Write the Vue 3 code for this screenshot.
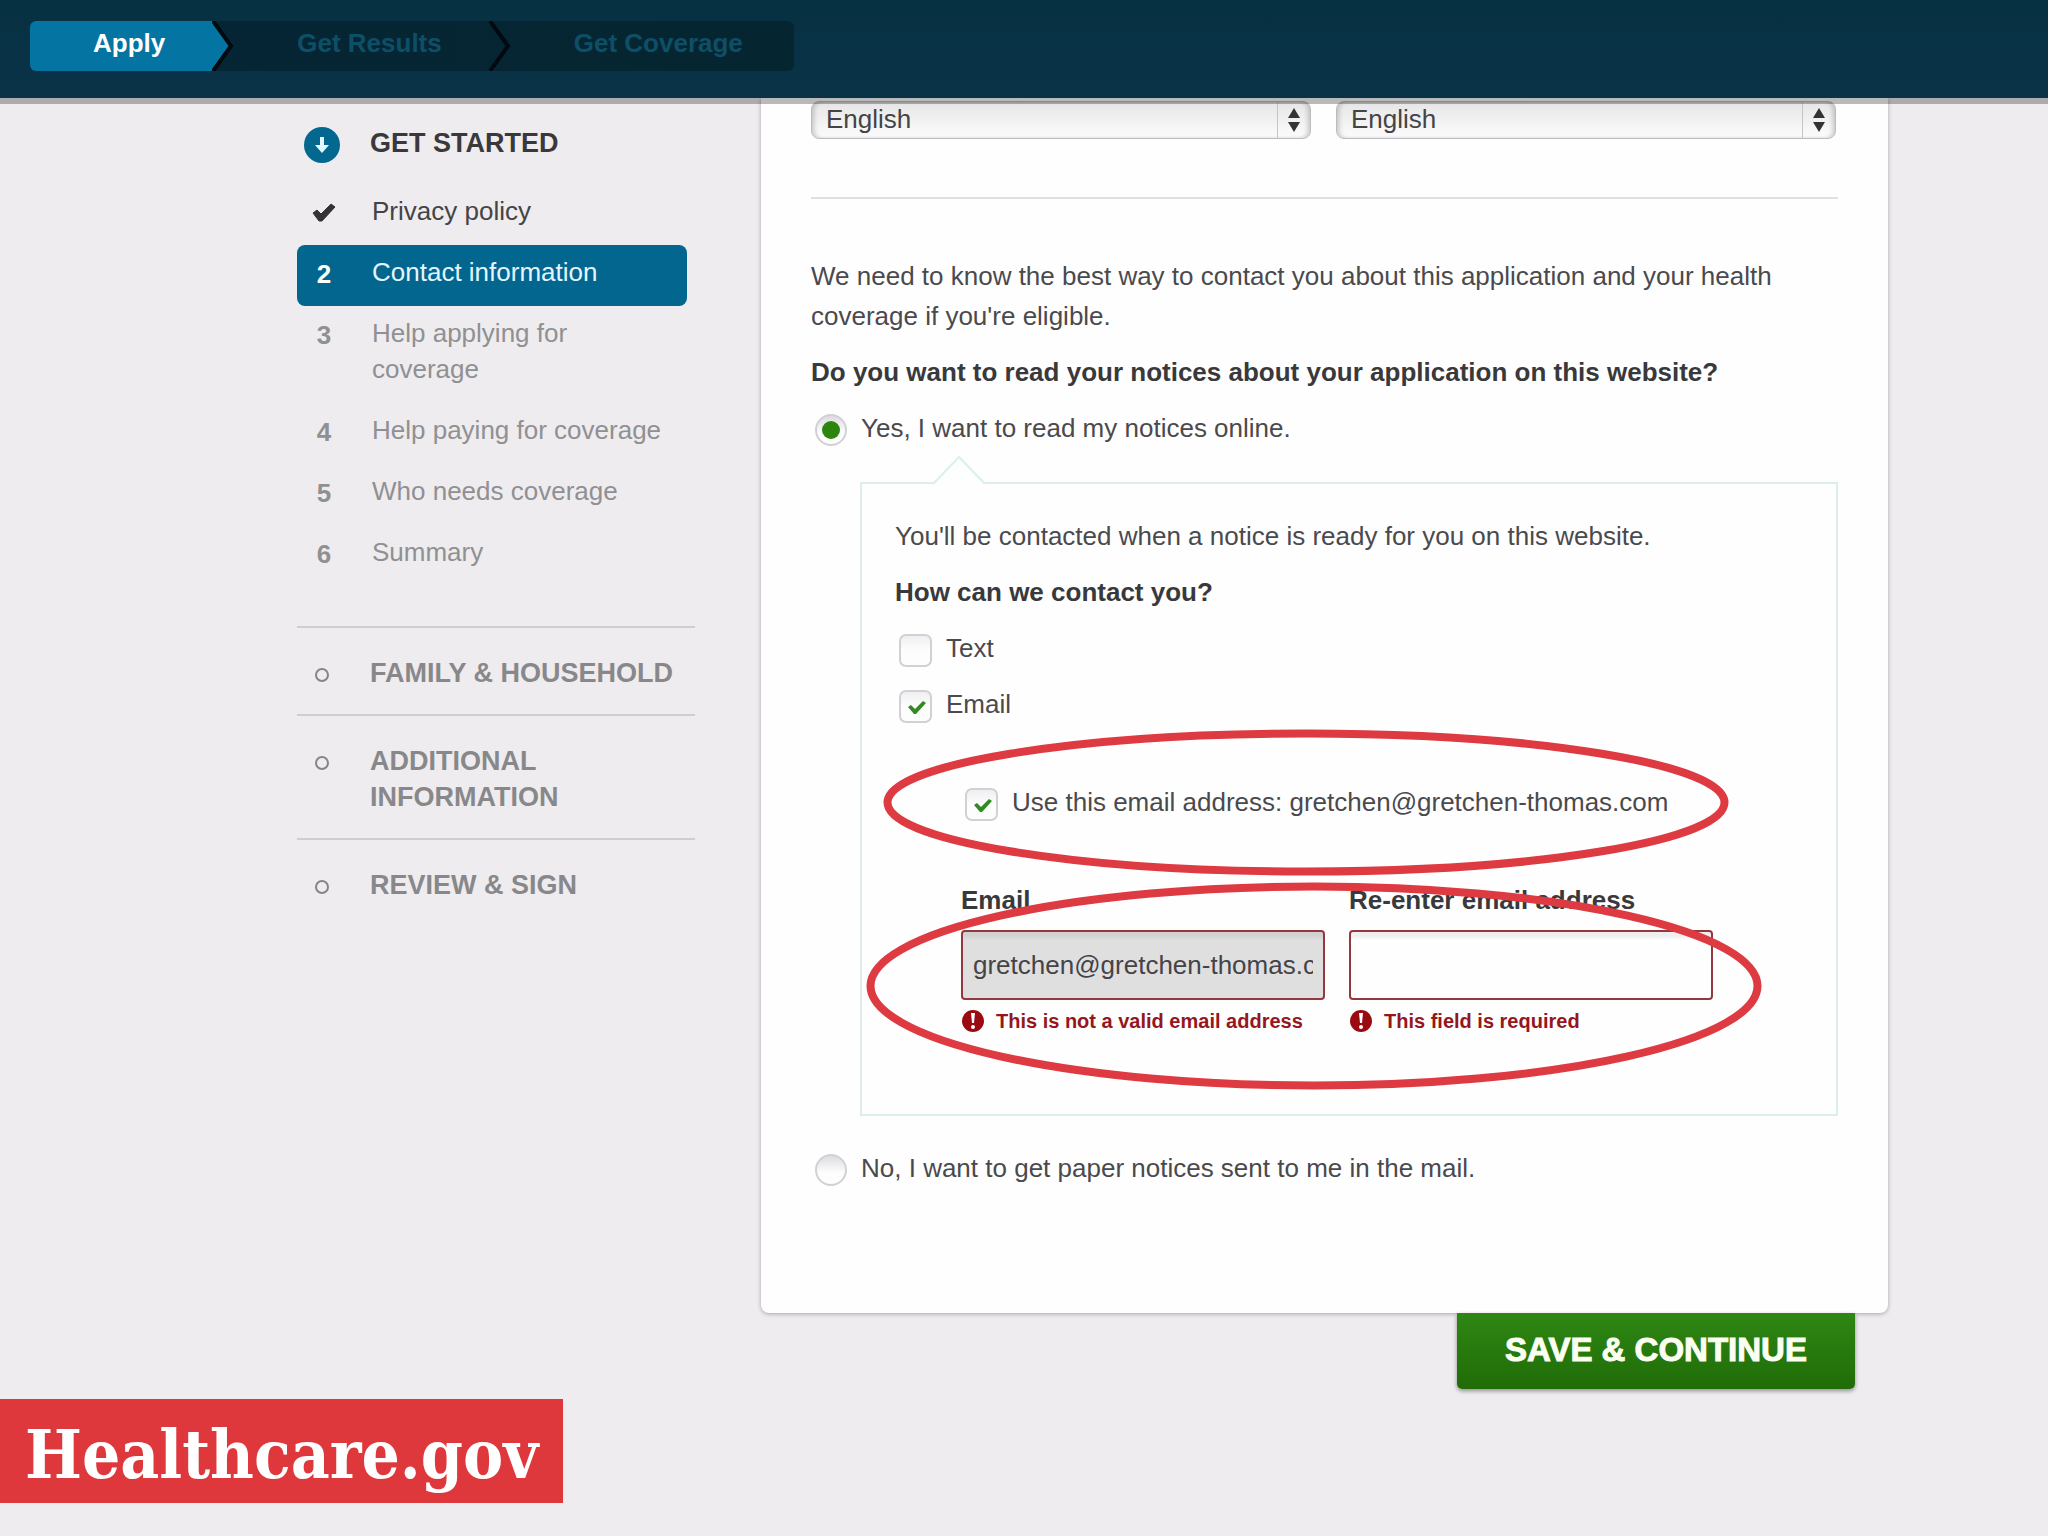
<script setup>
import { ref } from 'vue'

const steps = [
  { label: 'Apply', active: true },
  { label: 'Get Results', active: false },
  { label: 'Get Coverage', active: false },
]

const tasks = [
  { label: 'Privacy policy', done: true },
  { number: 2, label: 'Contact information', current: true },
  { number: 3, label: 'Help applying for coverage' },
  { number: 4, label: 'Help paying for coverage' },
  { number: 5, label: 'Who needs coverage' },
  { number: 6, label: 'Summary' },
]

const sections = ['Family & Household', 'Additional Information', 'Review & Sign']

const spoken = ref('English')
const written = ref('English')
const notices = ref('online')
const byText = ref(false)
const byEmail = ref(true)
const useAccountEmail = ref(true)
const email = ref('gretchen@gretchen-thomas.com')
const emailAgain = ref('')
</script>

<template>
  <div class="page">
    <header class="topbar">
      <nav aria-label="Progress">
        <ol class="steps">
          <li v-for="(step, i) in steps" :key="step.label" class="step" :class="{ active: step.active }">
            <a href="#">{{ step.label }}</a>
            <svg v-if="i < steps.length - 1" class="chevron" viewBox="0 0 22 50" aria-hidden="true">
              <path v-if="step.active" d="M0 0 L19 25 L0 50 Z" fill="#0475a3" />
              <path d="M1 0 L19 25 L1 50" fill="none" stroke="#020a10" stroke-width="4" />
            </svg>
          </li>
        </ol>
      </nav>
    </header>

    <div class="layout">
      <aside class="sidebar">
        <section class="group">
          <h2 class="group-title open">
            <span class="marker">
              <svg width="36" height="36" viewBox="0 0 36 36" aria-hidden="true">
                <circle cx="18" cy="18" r="18" fill="#03688f" />
                <path d="M16 10h4v8h5l-7 8-7-8h5z" fill="#e6f8ff" />
              </svg>
            </span>
            <span>Get Started</span>
          </h2>
          <ul class="tasks">
            <li v-for="task in tasks" :key="task.label">
              <a href="#" class="task" :class="{ done: task.done, current: task.current }">
                <span class="marker">
                  <svg v-if="task.done" width="24" height="20" viewBox="0 0 24 20" aria-hidden="true">
                    <path d="M1 10 L5 7 L9 11 L19 1 L23 4 L10 18 L7 18 Z" fill="#333336" stroke="#333336" stroke-linejoin="round" />
                  </svg>
                  <template v-else>{{ task.number }}</template>
                </span>
                <span>{{ task.label }}</span>
              </a>
            </li>
          </ul>
        </section>
        <section v-for="name in sections" :key="name" class="group later">
          <h2 class="group-title">
            <span class="marker">
              <svg width="16" height="16" viewBox="0 0 16 16" aria-hidden="true">
                <circle cx="8" cy="8" r="6" fill="none" stroke="#858588" stroke-width="2" />
              </svg>
            </span>
            <span>{{ name }}</span>
          </h2>
        </section>
      </aside>

      <main class="main">
        <form @submit.prevent>
          <div class="card">
            <div class="languages">
              <div class="picker">
                <select v-model="spoken" aria-label="Preferred spoken language">
                  <option>English</option>
                </select>
                <svg class="updown" viewBox="0 0 12 24" aria-hidden="true">
                  <path d="M6 0 L12 10 H0 Z M0 14 H12 L6 24 Z" fill="#333336" />
                </svg>
              </div>
              <div class="picker">
                <select v-model="written" aria-label="Preferred written language">
                  <option>English</option>
                </select>
                <svg class="updown" viewBox="0 0 12 24" aria-hidden="true">
                  <path d="M6 0 L12 10 H0 Z M0 14 H12 L6 24 Z" fill="#333336" />
                </svg>
              </div>
            </div>
            <hr class="rule" />

            <div class="stack">
              <p>We need to know the best way to contact you about this application and your health coverage if you're eligible.</p>
              <p class="strong">Do you want to read your notices about your application on this website?</p>
              <label class="option">
                <input v-model="notices" type="radio" name="notices" value="online" />
                <span>Yes, I want to read my notices online.</span>
              </label>
            </div>

            <div class="details">
              <svg class="pointer" viewBox="0 0 54 30" aria-hidden="true">
                <path d="M2 28 L27 2 L52 28 V30 H2 Z" fill="#fdffff" />
                <path d="M1 29 L27 2 L53 29" fill="none" stroke="#dcefed" stroke-width="2" />
              </svg>
              <div class="stack">
                <p>You'll be contacted when a notice is ready for you on this website.</p>
                <p class="strong">How can we contact you?</p>
                <label class="option">
                  <input v-model="byText" type="checkbox" />
                  <span>Text</span>
                </label>
                <label class="option">
                  <input v-model="byEmail" type="checkbox" />
                  <span>Email</span>
                </label>
              </div>

              <div class="email-block">
                <label class="option">
                  <input v-model="useAccountEmail" type="checkbox" />
                  <span>Use this email address: gretchen@gretchen-thomas.com</span>
                </label>
                <div class="fields">
                  <div class="field">
                    <label for="email" class="strong">Email</label>
                    <input id="email" v-model="email" class="box filled" type="text" readonly aria-describedby="email-error" />
                    <p id="email-error" class="error">
                      <svg width="24" height="24" viewBox="0 0 24 24" aria-hidden="true">
                        <circle cx="12" cy="12" r="11" fill="#9b0a10" />
                        <path d="M10 4h4l-1 10h-2z" fill="#fff" />
                        <circle cx="12" cy="18" r="2" fill="#fff" />
                      </svg>
                      <span>This is not a valid email address</span>
                    </p>
                  </div>
                  <div class="field">
                    <label for="email-again" class="strong">Re-enter email address</label>
                    <input id="email-again" v-model="emailAgain" class="box" type="text" aria-describedby="again-error" />
                    <p id="again-error" class="error">
                      <svg width="24" height="24" viewBox="0 0 24 24" aria-hidden="true">
                        <circle cx="12" cy="12" r="11" fill="#9b0a10" />
                        <path d="M10 4h4l-1 10h-2z" fill="#fff" />
                        <circle cx="12" cy="18" r="2" fill="#fff" />
                      </svg>
                      <span>This field is required</span>
                    </p>
                  </div>
                </div>
              </div>

              <svg class="ring ring-checkbox" width="846" height="147" viewBox="0 0 846 147" aria-hidden="true">
                <ellipse cx="423" cy="73.5" rx="418.5" ry="69" />
              </svg>
              <svg class="ring ring-fields" width="896" height="208" viewBox="0 0 896 208" aria-hidden="true">
                <ellipse cx="448" cy="104" rx="443.5" ry="99.5" />
              </svg>
            </div>

            <label class="option">
              <input v-model="notices" type="radio" name="notices" value="paper" />
              <span>No, I want to get paper notices sent to me in the mail.</span>
            </label>
          </div>
          <div class="actions">
            <button type="submit" class="save">Save &amp; Continue</button>
          </div>
        </form>
      </main>
    </div>

    <footer class="tag">Healthcare.gov</footer>
  </div>
</template>

<style>
body {
  background: #eeecee;
}
</style>

<style scoped>
.page {
  min-height: 100vh;
  background: #eeecee;
  color: #4a4a4d;
  font-family: "Liberation Sans", Arial, Helvetica, sans-serif;
  font-size: 26px;
  line-height: 40px;
}

.page *,
.page *::after {
  box-sizing: border-box;
}

h2,
p,
ul,
ol {
  margin: 0;
  padding: 0;
  list-style: none;
}

a {
  color: inherit;
  text-decoration: none;
}

.strong {
  color: #39393c;
  font-weight: 700;
}

/* Top progress bar */
.topbar {
  position: relative;
  z-index: 2;
  display: flex;
  height: 98px;
  padding: 21px 30px;
  background: linear-gradient(#063142, #0a3248);
  box-shadow: 0 6px 0 rgba(0, 0, 0, 0.27);
}

.steps {
  display: flex;
  height: 50px;
  padding-right: 4px;
  overflow: hidden;
  border-radius: 6px;
  background: linear-gradient(90deg, #052536, #052630);
}

.step {
  display: flex;
  color: #0e4f68;
  font-weight: 700;
}

.step a {
  padding: 0 47px 0 63px;
  line-height: 44px;
}

.step.active {
  color: #fff;
}

.step.active a {
  background: #0475a3;
}

.chevron {
  display: block;
  width: 22px;
  height: 50px;
}

/* Columns */
.layout {
  display: flex;
  gap: 66px;
  padding: 0 160px 0 297px;
}

.sidebar {
  flex: 0 0 398px;
  color: #909093;
  line-height: 36px;
}

.main {
  flex: 1;
  min-width: 0;
}

.group {
  padding-top: 27px;
}

.group.later {
  border-top: 2px solid #cfcdcf;
}

.group-title {
  display: flex;
  padding-bottom: 23px;
  color: #88888b;
  font-size: 27px;
  font-weight: 700;
  text-transform: uppercase;
}

.group-title.open {
  color: #39393c;
}

.marker {
  display: flex;
  flex: 0 0 50px;
  align-items: center;
  justify-content: center;
  height: 40px;
  margin-right: 23px;
  font-weight: 700;
}

.group-title .marker {
  margin-bottom: -4px;
}

.tasks {
  padding-bottom: 40px;
}

.task {
  display: flex;
  margin-right: 8px;
  padding: 9px 14px 16px 2px;
  border-radius: 8px;
}

.task .marker {
  margin-bottom: -4px;
}

.task.done {
  color: #444447;
}

.task.current {
  background: #02668f;
  color: #e4f6fd;
}

.task.current .marker {
  color: #fff;
}

/* Form card */
.card {
  padding: 3px 50px 125px;
  border-radius: 0 0 8px 8px;
  background: #fefefe;
  box-shadow: 0 1px 4px rgba(0, 0, 0, 0.3);
}

.languages {
  display: flex;
  gap: 25px;
  padding-right: 2px;
}

.picker {
  position: relative;
  flex: 1;
}

.picker::after {
  content: "";
  position: absolute;
  top: 1px;
  right: 33px;
  bottom: 1px;
  width: 1px;
  background: #c4c4c6;
}

.picker select {
  display: block;
  width: 100%;
  height: 38px;
  padding: 0 40px 2px 14px;
  border: 1px solid #bcbcbe;
  border-radius: 8px;
  background: linear-gradient(#e6e6e7, #fcfcfc);
  box-shadow: inset 4px 0 5px -2px rgba(0, 0, 0, 0.2), inset -4px 0 5px -2px rgba(0, 0, 0, 0.2);
  color: #444447;
  font: inherit;
  line-height: 34px;
  appearance: none;
}

.updown {
  position: absolute;
  top: 7px;
  right: 11px;
  width: 12px;
  height: 24px;
  pointer-events: none;
}

.rule {
  height: 2px;
  margin: 58px 0 57px;
  border: 0;
  background: #e0e0e3;
}

.stack {
  display: flex;
  flex-direction: column;
  gap: 16px;
}

.option {
  display: flex;
  align-items: flex-start;
}

.option input {
  flex: none;
  width: 33px;
  height: 33px;
  margin: 6px 14px 0 4px;
  border: 2px solid #d2d0d4;
  border-radius: 7px;
  background: linear-gradient(#efeff1, #fdfdfe 50%);
  appearance: none;
}

.option input[type="radio"] {
  width: 32px;
  height: 32px;
  border-radius: 50%;
  background: linear-gradient(#dddcdf, #fdfdfe 60%);
}

.option input::after {
  content: "";
  display: none;
}

.option input:checked::after {
  display: block;
}

.option input[type="checkbox"]::after {
  width: 18px;
  height: 13px;
  margin: 9px 0 0 7px;
  background: #318a22;
  clip-path: polygon(0 6px, 3px 4px, 7px 8px, 15px 0, 18px 2px, 8px 13px, 6px 13px);
}

.option input[type="radio"]::after {
  width: 18px;
  height: 18px;
  margin: 5px;
  border-radius: 50%;
  background: #2c850f;
}

.details {
  position: relative;
  margin: 34px 0 32px 49px;
  padding: 32px 33px 74px;
  border: 2px solid #dcefed;
  background: #fefefe;
}

.pointer {
  position: absolute;
  top: -29px;
  left: 70px;
  width: 54px;
  height: 30px;
}

.email-block {
  padding: 58px 0 0 66px;
}

.fields {
  display: flex;
  gap: 24px;
  padding: 58px 90px 0 0;
}

.field {
  flex: 1;
  min-width: 0;
}

.field label {
  display: block;
}

.box {
  display: block;
  width: 100%;
  height: 70px;
  margin-top: 10px;
  padding: 0 10px;
  border: 2px solid #94383f;
  border-radius: 4px;
  background: #fefefe;
  box-shadow: inset 0 8px 3px -2px rgba(60, 60, 70, 0.08);
  color: #444447;
  font: inherit;
}

.box.filled {
  background: #dfdfe0;
}

.error {
  display: flex;
  align-items: center;
  gap: 11px;
  color: #96161d;
  font-size: 20px;
  font-weight: 700;
  line-height: 42px;
  white-space: nowrap;
}

/* Annotation rings drawn over the form */
.ring {
  position: absolute;
  fill: none;
  stroke: #de3a41;
  stroke-width: 8px;
  pointer-events: none;
}

.ring-checkbox {
  top: 245px;
  left: 21px;
}

.ring-fields {
  top: 398px;
  left: 4px;
}

.details {
  padding-bottom: 72px;
}

.actions {
  display: flex;
  justify-content: flex-end;
  padding-right: 33px;
}

.save {
  position: relative;
  width: 398px;
  height: 76px;
  padding: 0 0 2px;
  border: 0;
  border-radius: 0 0 5px 5px;
  background: linear-gradient(#2e8713, #206c08);
  box-shadow: 0 2px 4px rgba(0, 0, 0, 0.4);
  color: #fafff2;
  font: 700 33px "Liberation Sans", Arial, Helvetica, sans-serif;
  text-transform: uppercase;
  -webkit-text-stroke: 1px #fafff2;
}

/* Slide caption */
.tag {
  width: fit-content;
  margin-top: 10px;
  padding: 8px 25px 0;
  background: #de383d;
  color: #fff;
  font-family: "DejaVu Serif Condensed", "DejaVu Serif", serif;
  font-size: 67px;
  font-weight: 700;
  line-height: 96px;
}
</style>
